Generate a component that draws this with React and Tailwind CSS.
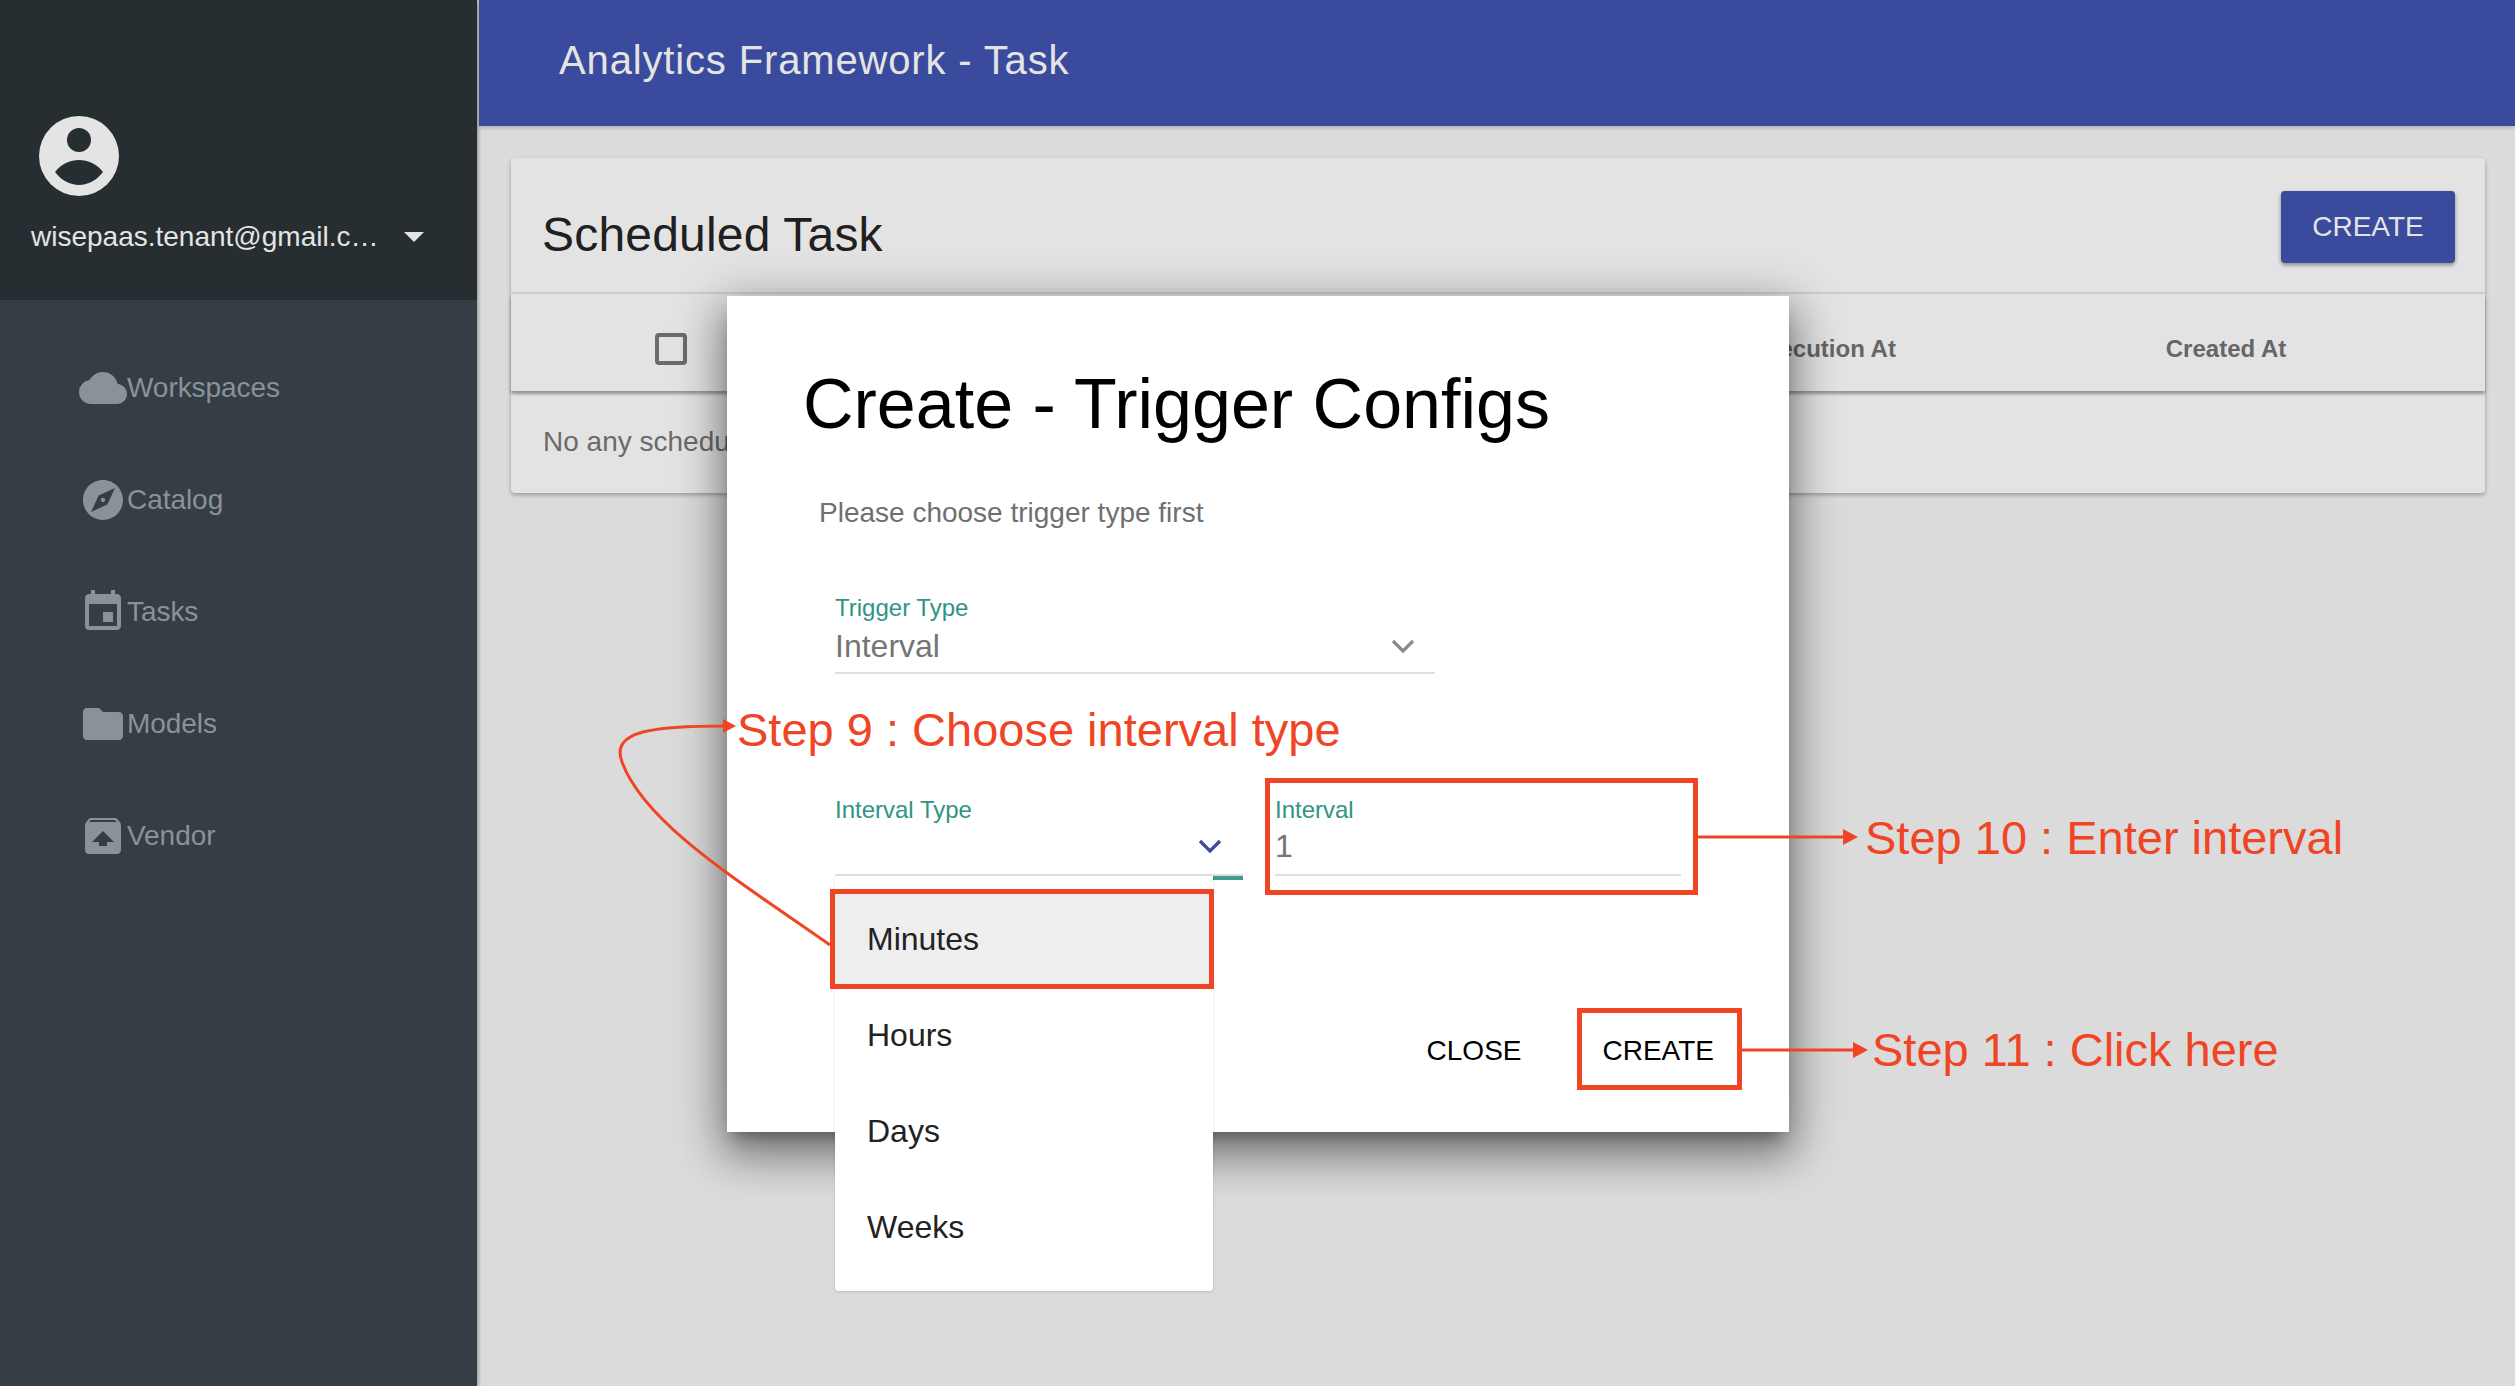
import React from "react";
import { MdCloud, MdExplore, MdEvent, MdFolder, MdUnarchive } from "react-icons/md";

const nav = [
  ["Workspaces", MdCloud],
  ["Catalog", MdExplore],
  ["Tasks", MdEvent],
  ["Models", MdFolder],
  ["Vendor", MdUnarchive],
];

function Chevron({ color }) {
  return (
    <svg width="24" height="14" viewBox="0 0 24 14" fill="none">
      <polyline points="2,2 12,12 22,2" stroke={color} strokeWidth="3.2" />
    </svg>
  );
}

export default function App() {
  return (
    <div className="relative flex h-screen w-full overflow-hidden bg-[#dbdbdb] font-['Liberation_Sans',Arial,sans-serif]">
      <aside className="flex w-[477px] shrink-0 flex-col bg-[#353e45] shadow-[2px_0_3px_rgba(0,0,0,0.25)]">
        <div className="h-[300px] shrink-0 bg-[#262e31] pt-[116px]">
          <svg className="ml-[39px] block" width="80" height="80" viewBox="0 0 80 80">
            <circle cx="40" cy="40" r="40" fill="#e4e4e4" />
            <circle cx="40" cy="24" r="12" fill="#262e31" />
            <path d="M16 56 C22 48 31 44 40 44 C49 44 58 48 64 56 C58 64 49 69 40 69 C31 69 22 64 16 56Z" fill="#262e31" />
          </svg>
          <div className="mt-[25px] flex items-center pl-[31px]">
            <span className="text-[28px] leading-[32px] text-[#e4e4e4]">wisepaas.tenant@gmail.c…</span>
            <svg className="ml-[26px]" width="20" height="10" viewBox="0 0 20 10">
              <polygon points="0,0 20,0 10,10" fill="#e4e4e4" />
            </svg>
          </div>
        </div>
        <nav className="pt-[32px]">
          {nav.map(([label, Icon]) => (
            <div key={label} className="flex h-[112px] items-center pl-[79px] text-[#8b9297]">
              <Icon size={48} />
              <span className="text-[28px] leading-[32px] tracking-[-0.05px]">{label}</span>
            </div>
          ))}
        </nav>
      </aside>

      <main className="ml-[2px] flex min-w-0 flex-1 flex-col">
        <header className="flex h-[126px] shrink-0 items-center bg-[#3a4b9d] pb-[6px] pl-[80px] shadow-[0_2px_4px_rgba(0,0,0,0.2)]">
          <h1 className="text-[40px] font-normal leading-[48px] tracking-[0.85px] text-[#e4e4e4]">Analytics Framework - Task</h1>
        </header>
        <div className="pl-[32px] pr-[30px] pt-[32px]">
          <section className="rounded-[4px] bg-[#e3e3e3] shadow-[0_2px_4px_rgba(0,0,0,0.3)]">
            <div className="flex h-[136px] items-center justify-between border-b-2 border-[#cdcdcd] pl-[31px] pr-[30px] pt-[3px]">
              <h2 className="mt-[17px] text-[48px] font-normal leading-[56px] tracking-[0.2px] text-[#202020]">Scheduled Task</h2>
              <button className="flex h-[72px] w-[174px] items-center justify-center rounded-[4px] bg-[#3a4b9d] text-[28px] text-[#e4e4e4] shadow-[0_2px_4px_rgba(0,0,0,0.4)]">CREATE</button>
            </div>
            <div className="flex h-[97px] items-center gap-[131px] pl-[144px] pr-[109px] pt-[12px] shadow-[0_3px_3px_rgba(0,0,0,0.35)]">
              <div className="h-[32px] w-[32px] rounded-[4px] border-4 border-[#6b6b6b]" />
              <div className="ml-auto w-[300px] text-center text-[24px] font-bold leading-[28px] text-[#666666]">Last Execution At</div>
              <div className="w-[300px] text-center text-[24px] font-bold leading-[28px] text-[#666666]">Created At</div>
            </div>
            <div className="flex h-[102px] items-center pl-[32px] text-[28px] leading-[32px] text-[#6a6a6a]">No any scheduled task</div>
          </section>
        </div>
      </main>

      {/* Dialog */}
      <div className="absolute left-[727px] top-[296px] h-[836px] w-[1062px] bg-white shadow-[0_11px_15px_-7px_rgba(0,0,0,0.35),0_24px_38px_3px_rgba(0,0,0,0.28),0_9px_46px_8px_rgba(0,0,0,0.24)]">
        <h3 className="pl-[76px] pt-[68px] text-[70px] font-normal leading-[80px] text-black">Create - Trigger Configs</h3>
        <p className="mt-[53px] pl-[92px] text-[28px] leading-[32px] text-[#6f6f6f]">Please choose trigger type first</p>
        <div className="ml-[108px] mt-[65px] w-[600px] border-b-2 border-[#e0e0e0] pb-[8px]">
          <div className="text-[24px] leading-[28px] text-[#2f9484]">Trigger Type</div>
          <div className="mt-[6px] flex items-center justify-between pr-[20px]">
            <span className="text-[32px] leading-[36px] text-[#757575]">Interval</span>
            <Chevron color="#8a8a8a" />
          </div>
        </div>
        <div className="ml-[108px] mt-[122px] flex gap-[32px]">
          <div className="w-[408px]">
            <div className="border-b-2 border-[#e0e0e0] pb-[10px]">
              <div className="text-[24px] leading-[28px] text-[#2f9484]">Interval Type</div>
              <div className="mt-[4px] flex h-[36px] items-center justify-end pr-[21px]">
                <Chevron color="#3a4b9d" />
              </div>
            </div>
            <div className="h-[4px] bg-[#3f9b8b]" />
          </div>
          <div className="w-[406px]">
            <div className="border-b-2 border-[#e0e0e0] pb-[10px]">
              <div className="text-[24px] leading-[28px] text-[#2f9484]">Interval</div>
              <div className="mt-[4px] text-[32px] leading-[36px] text-[#757575]">1</div>
            </div>
          </div>
        </div>
        <div className="mt-[155px] flex justify-end gap-[81px] pr-[75px] text-[28px] leading-[32px] text-black">
          <span>CLOSE</span>
          <span>CREATE</span>
        </div>
      </div>

      {/* Select menu */}
      <ul className="absolute left-[835px] top-[876px] w-[378px] rounded-b-[4px] bg-white pb-[16px] pt-[15px] text-[32px] leading-[36px] text-[#222222] shadow-[0_1px_3px_rgba(0,0,0,0.15)]">
        <li className="flex h-[96px] items-center bg-[#eeeeee] pl-[32px]">Minutes</li>
        <li className="flex h-[96px] items-center pl-[32px]">Hours</li>
        <li className="flex h-[96px] items-center pl-[32px]">Days</li>
        <li className="flex h-[96px] items-center pl-[32px]">Weeks</li>
      </ul>

      {/* Annotations */}
      <div className="absolute left-[830px] top-[889px] h-[100px] w-[384px] border-[5px] border-[#f04525]" />
      <div className="absolute left-[1265px] top-[778px] h-[117px] w-[433px] border-[5px] border-[#f04525]" />
      <div className="absolute left-[1577px] top-[1008px] h-[82px] w-[165px] border-[5px] border-[#f04525]" />
      <svg className="pointer-events-none absolute left-0 top-0" width="2515" height="1386" viewBox="0 0 2515 1386" fill="none">
        <path d="M830 945 C745 885 645 825 622 762 C610 730 655 726 727 726" stroke="#f04525" strokeWidth="3" />
        <polygon points="736,726 723,719 723,733" fill="#f04525" />
        <line x1="1698" y1="837" x2="1846" y2="837" stroke="#f04525" strokeWidth="3" />
        <polygon points="1858,837 1843,829 1843,845" fill="#f04525" />
        <line x1="1742" y1="1050" x2="1856" y2="1050" stroke="#f04525" strokeWidth="3" />
        <polygon points="1868,1050 1853,1042 1853,1058" fill="#f04525" />
      </svg>
      <span className="absolute left-[737px] top-[702px] whitespace-nowrap text-[47px] leading-[56px] text-[#f04525]">Step 9 : Choose interval type</span>
      <span className="absolute left-[1865px] top-[810px] whitespace-nowrap text-[47px] leading-[56px] text-[#f04525]">Step 10 : Enter interval</span>
      <span className="absolute left-[1872px] top-[1022px] whitespace-nowrap text-[47px] leading-[56px] text-[#f04525]">Step 11 : Click here</span>
    </div>
  );
}
